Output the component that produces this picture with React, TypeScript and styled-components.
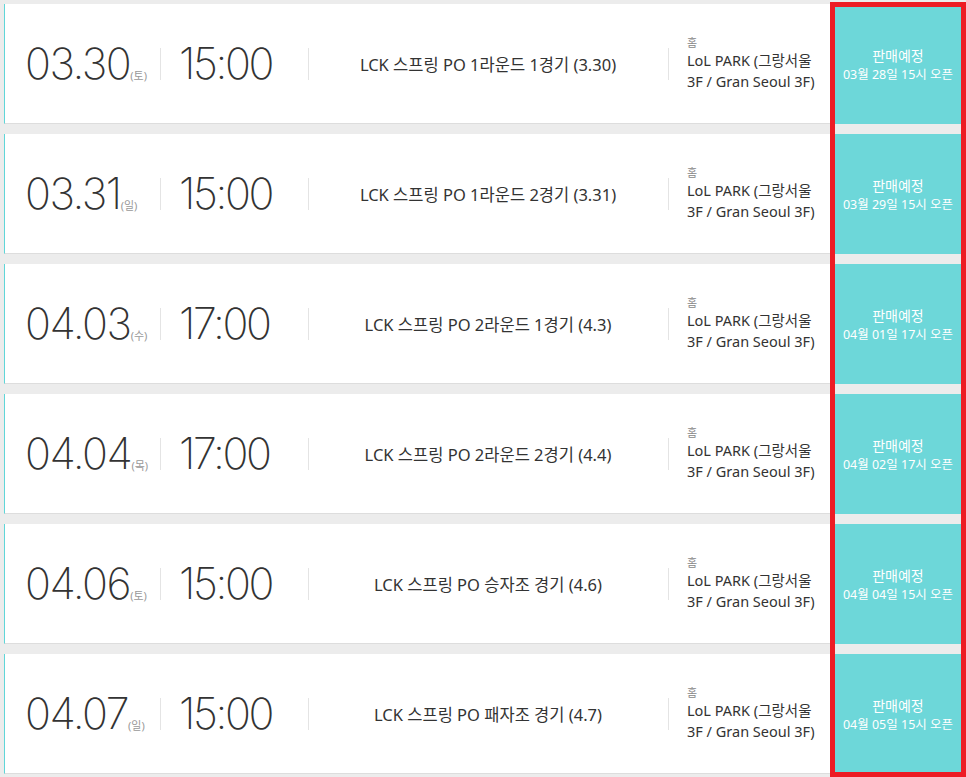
import React, { FC } from "react";
import styled, { createGlobalStyle } from "styled-components";

const GlobalStyle = createGlobalStyle`
  html, body {
    margin: 0;
    padding: 0;
    background: #ececec;
  }
  body {
    font-family: "Noto Sans", "Noto Sans CJK KR", sans-serif;
    color: #333;
  }
`;

const Container = styled.div`
  position: relative;
  width: 966px;
  height: 777px;
  overflow: hidden;
  box-sizing: border-box;
  padding: 4px 0 0 4px;
  display: flex;
  flex-direction: column;
  gap: 10px;
`;

const Row = styled.div`
  display: flex;
  align-items: stretch;
  height: 120px;
  flex-shrink: 0;
  background: #fff;
  border-left: 1px solid #5fd6d8;
  border-bottom: 1px solid #ddd;
  box-sizing: border-box;
`;

const Cell = styled.div<{ $width: number; $center?: boolean; $pad?: number; $divider?: boolean }>`
  position: relative;
  width: ${p => p.$width}px;
  flex-shrink: 0;
  display: flex;
  align-items: center;
  justify-content: ${p => (p.$center ? "center" : "flex-start")};
  padding-left: ${p => p.$pad ?? 0}px;
  box-sizing: border-box;

  &::before {
    content: "";
    display: ${p => (p.$divider ? "block" : "none")};
    position: absolute;
    left: 0;
    top: 44px;
    height: 32px;
    width: 1px;
    background: #e4e4e4;
  }
`;

const BigNum = styled.span<{ $tight?: boolean }>`
  font-family: "Inter", sans-serif;
  font-weight: 200;
  font-size: 43px;
  letter-spacing: ${p => (p.$tight ? "-2.4px" : "-1.5px")};
  color: #333;
  line-height: 1;
`;

const Day = styled.span`
  font-size: 11px;
  color: #999;
  margin-left: 0;
  position: relative;
  top: 1px;
`;

const DateWrap = styled.div`
  display: flex;
  align-items: baseline;
`;

const Title = styled.div`
  font-size: 16.5px;
  color: #333;
`;

const Venue = styled.div`
  display: flex;
  flex-direction: column;
  font-size: 14.5px;
  line-height: 21px;
  color: #333;
  margin-top: 0;
`;

const VenueLabel = styled.span`
  font-size: 11px;
  line-height: 14px;
  color: #888;
`;

const Status = styled.div`
  flex: 1;
  background: #6dd7d9;
  color: #fff;
  display: flex;
  flex-direction: column;
  align-items: center;
  justify-content: center;
  margin-bottom: -1px;
`;

const StatusTitle = styled.div`
  font-size: 14px;
  line-height: 20px;
`;

const StatusSub = styled.div`
  font-size: 12.5px;
  line-height: 17px;
`;

const Highlight = styled.div`
  position: absolute;
  left: 830px;
  top: 2px;
  width: 136px;
  height: 775px;
  border: 5px solid #ed1c24;
  box-sizing: border-box;
  pointer-events: none;
`;

type Match = {
  date: string;
  day: string;
  time: string;
  title: string;
  open: string;
};

const matches: Match[] = [
  { date: "03.30", day: "토", time: "15:00", title: "LCK 스프링 PO 1라운드 1경기 (3.30)", open: "03월 28일 15시 오픈" },
  { date: "03.31", day: "일", time: "15:00", title: "LCK 스프링 PO 1라운드 2경기 (3.31)", open: "03월 29일 15시 오픈" },
  { date: "04.03", day: "수", time: "17:00", title: "LCK 스프링 PO 2라운드 1경기 (4.3)", open: "04월 01일 17시 오픈" },
  { date: "04.04", day: "목", time: "17:00", title: "LCK 스프링 PO 2라운드 2경기 (4.4)", open: "04월 02일 17시 오픈" },
  { date: "04.06", day: "토", time: "15:00", title: "LCK 스프링 PO 승자조 경기 (4.6)", open: "04월 04일 15시 오픈" },
  { date: "04.07", day: "일", time: "15:00", title: "LCK 스프링 PO 패자조 경기 (4.7)", open: "04월 05일 15시 오픈" }
];

const App: FC = () => {
  return (
    <Container>
      <GlobalStyle />
      {matches.map(m => (
        <Row key={m.date}>
          <Cell $width={155} $pad={20}>
            <DateWrap>
              <BigNum>{m.date}</BigNum>
              <Day>({m.day})</Day>
            </DateWrap>
          </Cell>
          <Cell $width={148} $pad={19} $divider>
            <BigNum $tight>{m.time}</BigNum>
          </Cell>
          <Cell $width={360} $center $divider>
            <Title>{m.title}</Title>
          </Cell>
          <Cell $width={162} $pad={19} $divider>
            <Venue>
              <VenueLabel>홈</VenueLabel>
              <span>LoL PARK (그랑서울</span>
              <span>3F / Gran Seoul 3F)</span>
            </Venue>
          </Cell>
          <Status>
            <StatusTitle>판매예정</StatusTitle>
            <StatusSub>{m.open}</StatusSub>
          </Status>
        </Row>
      ))}
      <Highlight />
    </Container>
  );
};

export default App;
